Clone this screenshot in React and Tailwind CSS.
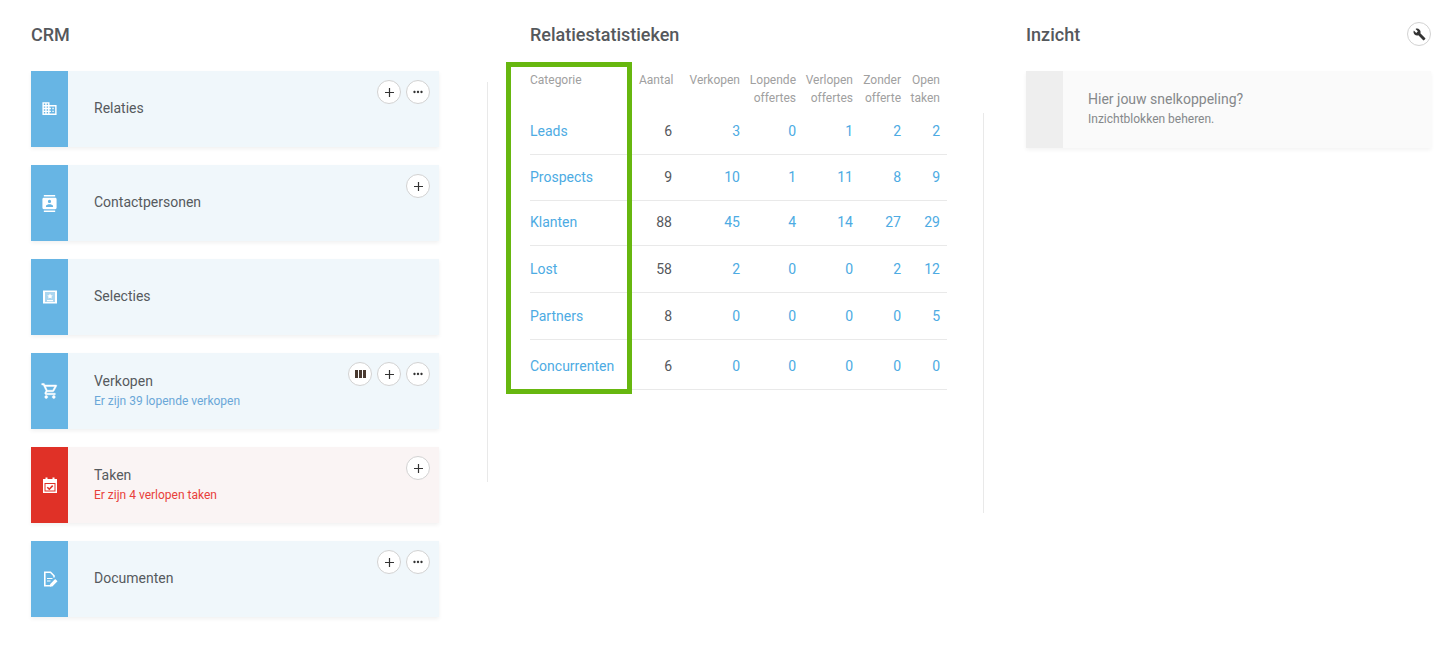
import React from "react";
import { MdDomain, MdContacts, MdBuild, MdMoreHoriz } from "react-icons/md";

const SelIcon = () => (
  <svg width="14" height="14" viewBox="0 0 14 14">
    <rect x="0" y="1" width="14" height="12" fill="white" fillOpacity="0.45" />
    <path fillRule="evenodd" fill="white" d="M0 .5h14v13H0zM2 2v10h10V2z" />
    <path fill="white" d="M7 3.500l.9 1.700 1.900.3-1.400 1.300.4 1.800L7 7.800l-1.800.8.400-1.800L4.200 5.500l1.900-.3zM4 10h6v1.200H4z" />
  </svg>
);
const CartIcon = () => (
  <svg width="18" height="18" viewBox="0 0 24 24" fill="white" stroke="white" strokeWidth="0.6">
    <path d="M15.550 13c.75 0 1.410-.41 1.750-1.030l3.580-6.490A.996.996 0 0 0 20.010 4H5.210l-.94-2H1v2h2l3.600 7.590-1.350 2.440C4.520 15.370 5.480 17 7 17h12v-2H7l1.100-2h7.450zM6.160 6h12.150l-2.760 5H8.530L6.160 6zM7 18c-1.100 0-1.990.9-1.990 2S5.900 22 7 22s2-.9 2-2-.9-2-2-2zm10 0c-1.100 0-1.990.9-1.990 2s.89 2 1.990 2 2-.9 2-2-.9-2-2-2z" />
  </svg>
);
const CalIcon = () => (
  <svg width="16" height="16" viewBox="0 0 16 16" fill="white">
    <path fillRule="evenodd" d="M3.500 0.500h2V2h5V.5h2V2H15v14H1V2h2.500zM2.500 6v8.500h11V6z" />
    <path d="M3.500 7h9v6.500h-9z" />
    <path d="M5.300 10.200l2 2 3.400-3.600" fill="none" stroke="#e03127" strokeWidth="1.600" />
  </svg>
);
const DocIcon = () => (
  <svg width="16" height="16" viewBox="0 0 16 16" fill="none" stroke="white">
    <path strokeWidth="1.600" d="M9 14.700H2.800V1.300H8.500L12 4.800V6.500" />
    <path strokeWidth="1.100" d="M5 7.500h5.500M5 10h3.500" />
    <path fill="white" stroke="none" d="M8 15.500v-2.200l5.200-5.200 2.300 2.200-5.200 5.200z" />
  </svg>
);
const PlusIcon = () => (
  <svg width="11" height="11" viewBox="0 0 11 11" stroke="#333" strokeWidth="1.200">
    <path d="M5.500 1v9M1 5.500h9" />
  </svg>
);
const ColsIcon = () => (
  <svg width="11" height="8" viewBox="0 0 11 8" fill="#4a3a30">
    <path d="M0 0h3v8H0zM4 0h3v8H4zM8 0h3v8H8z" />
  </svg>
);

const RoundBtn = ({ children }) => (
  <button className="w-6 h-6 rounded-full bg-white border border-[#d2d2d2] flex items-center justify-center text-[#333]">
    {children}
  </button>
);

const Plus = () => <RoundBtn><PlusIcon /></RoundBtn>;
const More = () => <RoundBtn><MdMoreHoriz size={14} /></RoundBtn>;
const Cols = () => <RoundBtn><ColsIcon /></RoundBtn>;

const cards = [
  { title: "Relaties", icon: <MdDomain size={17} color="white" className="-mt-[2px]" />, btns: [<Plus key="p" />, <More key="m" />] },
  { title: "Contactpersonen", icon: <MdContacts size={17} color="white" />, btns: [<Plus key="p" />] },
  { title: "Selecties", icon: <SelIcon />, btns: [] },
  { title: "Verkopen", sub: "Er zijn 39 lopende verkopen", icon: <CartIcon />, btns: [<Cols key="c" />, <Plus key="p" />, <More key="m" />] },
  { title: "Taken", sub: "Er zijn 4 verlopen taken", red: true, icon: <CalIcon />, btns: [<Plus key="p" />] },
  { title: "Documenten", icon: <DocIcon />, btns: [<Plus key="p" />, <More key="m" />] },
];

const Card = ({ title, sub, icon, btns, red }) => (
  <div className={`relative h-[76px] flex shadow-[0_2px_4px_rgba(0,0,0,0.06)] ${red ? "bg-[#faf4f4]" : "bg-[#f0f7fb]"}`}>
    <div className={`w-[37px] shrink-0 flex items-center justify-center ${red ? "bg-[#e03127]" : "bg-[#67b5e4]"}`}>{icon}</div>
    <div className={`pl-[26px] flex flex-col justify-center ${sub ? "pb-[1px]" : "pb-[2px]"}`}>
      <div className="text-[14px] leading-[18px] text-[#565a5e]">{title}</div>
      {sub && <div className={`text-[12px] leading-[16px] mt-[3px] ${red ? "text-[#e8403a]" : "text-[#6ba7d8]"}`}>{sub}</div>}
    </div>
    {btns.length > 0 && <div className="absolute right-[9px] top-[9px] flex gap-[5px]">{btns}</div>}
  </div>
);

const widths = ["w-[109px]", "w-[40px]", "w-[68px]", "w-[56px]", "w-[57px]", "w-[48px]", "w-[39px]"];
const heads = [
  ["Categorie"], ["Aantal"], ["Verkopen"], ["Lopende", "offertes"], ["Verlopen", "offertes"], ["Zonder", "offerte"], ["Open", "taken"],
];
const rows = [
  { h: "h-[47px]", v: ["Leads", 6, 3, 0, 1, 2, 2] },
  { h: "h-[46px]", v: ["Prospects", 9, 10, 1, 11, 8, 9] },
  { h: "h-[45px] pb-[2px]", v: ["Klanten", 88, 45, 4, 14, 27, 29] },
  { h: "h-[47px]", v: ["Lost", 58, 2, 0, 0, 2, 12] },
  { h: "h-[47px]", v: ["Partners", 8, 0, 0, 0, 0, 5] },
  { h: "h-[50px] pt-[4px]", v: ["Concurrenten", 6, 0, 0, 0, 0, 0] },
];

export default function App() {
  return (
    <div className="relative w-[1456px] h-[646px] bg-white overflow-hidden flex font-['Roboto',sans-serif]">
      <div className="w-[487px] shrink-0 pl-[31px] pr-[48px] pt-[24px]">
        <h2 className="text-[18px] leading-[21px] font-medium text-[#55585c] h-[47px]">CRM</h2>
        <div className="flex flex-col gap-[18px]">
          {cards.map((c) => <Card key={c.title} {...c} />)}
        </div>
      </div>
      <div className="w-px h-[400px] mt-[82px] bg-[#e9e9e9] shrink-0" />
      <div className="w-[495px] shrink-0 pl-[42px] pt-[24px]">
        <h2 className="text-[18px] leading-[21px] font-medium text-[#55585c] h-[47px]">Relatiestatistieken</h2>
        <div className="w-[417px]">
          <div className="flex h-[37px] text-[12px] leading-[18px] text-[#a0a0a0]">
            {heads.map((h, i) => (
              <div key={i} className={`${widths[i]} shrink-0 ${i === 0 ? "" : "text-right pr-[7px]"}`}>
                {h.map((l) => <div key={l}>{l}</div>)}
              </div>
            ))}
          </div>
          {rows.map((r, ri) => (
            <div key={ri} className={`flex items-center border-b border-[#e9e9e9] ${r.h} text-[14px]`}>
              {r.v.map((v, i) => (
                <div key={i} className={`${widths[i]} shrink-0 ${i === 0 ? "text-[#4dabe3]" : i === 1 ? "text-right pr-[7px] text-[#55585c]" : "text-right pr-[7px] text-[#4dabe3]"}`}>{v}</div>
              ))}
            </div>
          ))}
        </div>
      </div>
      <div className="w-px h-[400px] mt-[113px] bg-[#e9e9e9] shrink-0" />
      <div className="flex-1 pl-[42px] pr-[25px] pt-[24px]">
        <div className="flex justify-between h-[47px]">
          <h2 className="text-[18px] leading-[21px] font-medium text-[#55585c]">Inzicht</h2>
          <div className="-mt-[2px]"><RoundBtn><MdBuild size={13} className="text-[#333]" /></RoundBtn></div>
        </div>
        <div className="h-[77px] flex bg-[#fafafa] shadow-[0_2px_4px_rgba(0,0,0,0.05)]">
          <div className="w-[37px] bg-[#eeeeee] shrink-0" />
          <div className="pl-[25px] pb-[3px] flex flex-col justify-center">
            <div className="text-[14px] leading-[18px] text-[#85888a]">Hier jouw snelkoppeling?</div>
            <div className="text-[12px] leading-[16px] mt-[3px] text-[#85888a]">Inzichtblokken beheren.</div>
          </div>
        </div>
      </div>
      <div className="absolute left-[506px] top-[62px] w-[126px] h-[332px] border-[5px] border-[#67b70f]" />
    </div>
  );
}
